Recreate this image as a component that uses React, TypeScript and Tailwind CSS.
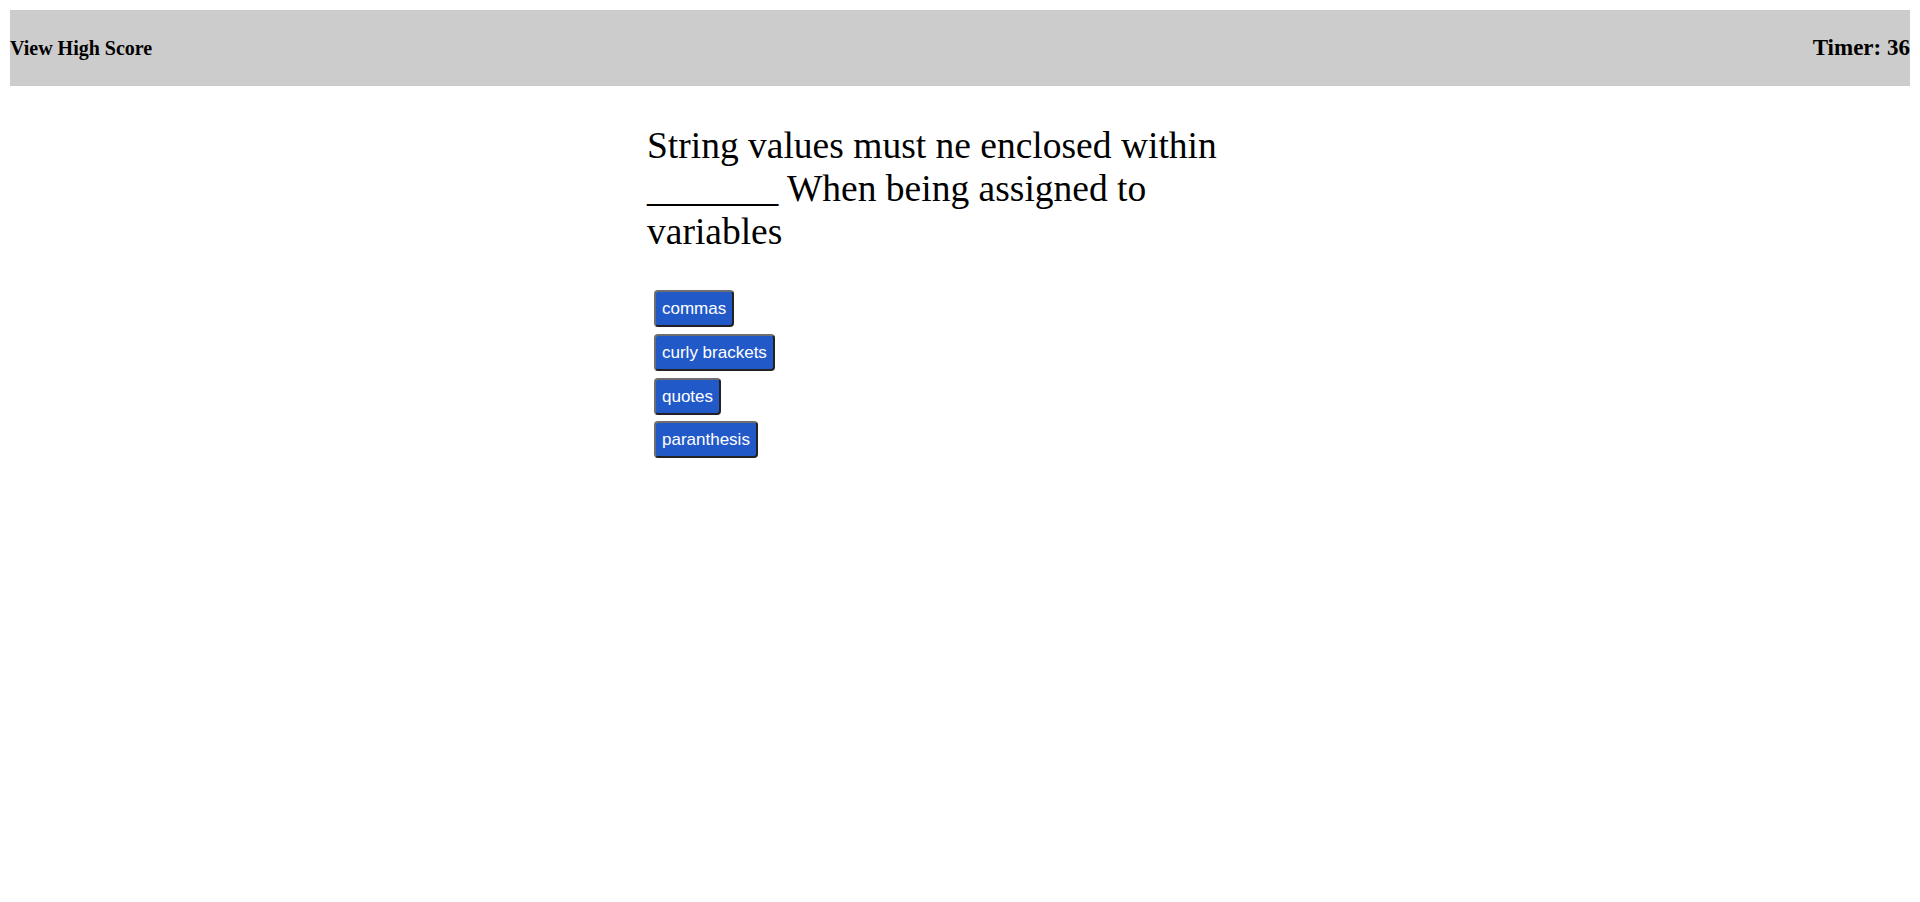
import React from "react";

const answers = ["commas", "curly brackets", "quotes", "paranthesis"];

export default function App() {
  return (
    <div className="p-[10px] text-black" style={{ fontFamily: '"Liberation Serif", "Times New Roman", serif' }}>
      <header className="h-[76px] bg-[#cccccc] flex items-center justify-between">
        <span className="text-[20px] font-bold">View High Score</span>
        <span className="text-[23px] font-bold">Timer: 36</span>
      </header>
      <main className="ml-[637px] mt-[38px] w-[600px]">
        <p className="text-[37.5px] leading-[1.15]">
          String values must ne enclosed within _______ When being assigned to variables
        </p>
        <div className="mt-[37px] ml-[7px] flex flex-col items-start gap-[6.6px]">
          {answers.map((a) => (
            <button
              key={a}
              className="bg-[#2259c9] text-white text-[17px] leading-[19px] px-[6px] py-[7px] rounded-[4px] border-2 border-t-[#6e6e6e] border-l-[#6e6e6e] border-b-[#222222] border-r-[#222222] font-['Liberation_Sans',Arial,sans-serif]"
            >
              {a}
            </button>
          ))}
        </div>
      </main>
    </div>
  );
}
